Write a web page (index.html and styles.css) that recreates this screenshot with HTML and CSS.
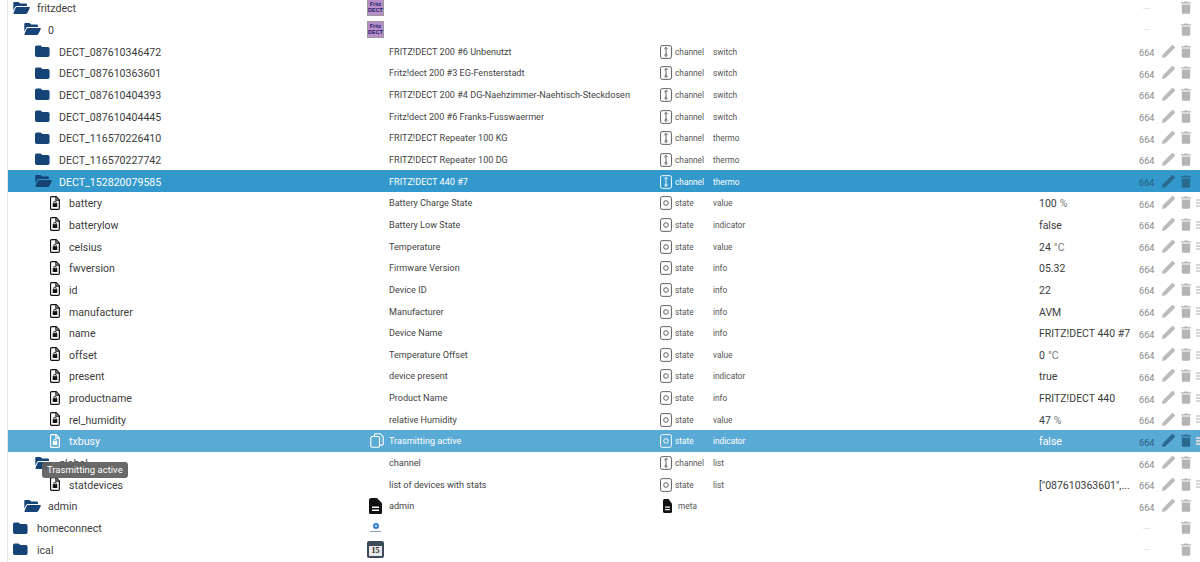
FILE: index.html
```html
<!DOCTYPE html>
<html lang="de">
<head>
<meta charset="utf-8">
<title>fritzdect</title>
<link rel="stylesheet" href="styles.css">
</head>
<body>
<svg class="defs" width="0" height="0" aria-hidden="true">
  <symbol id="closed" viewBox="0 0 19.800 14" preserveAspectRatio="xMinYMid meet"><path d="M2 .5h4.600L8.400 2.400H15a2 2 0 0 1 2 2V12a2 2 0 0 1-2 2H2a2 2 0 0 1-2-2V2.500a2 2 0 0 1 2-2z"/></symbol>
  <symbol id="open" viewBox="0 0 18 14" preserveAspectRatio="none"><path d="M1.500 0h4.300l1.800 1.800h5.700c.9 0 1.500.6 1.500 1.500V4.700H4.300c-1 0-1.800.5-2.200 1.400L.3 10V1.300C.3.500.7 0 1.500 0z"/><path d="M4.200 5.800H17c.7 0 1.100.6.800 1.200l-2.600 5.800c-.4.800-1.100 1.200-2 1.200H1.300c-.7 0-1.100-.6-.8-1.200l2-5.100c.3-1.100.9-1.900 1.700-1.900z"/></symbol>
  <symbol id="lock" viewBox="0 0 11 15" preserveAspectRatio="none"><path class="fileline" d="M1.800.7h5l3.500 3.500v8.900c0 .7-.5 1.200-1.200 1.200H1.800c-.7 0-1.200-.5-1.200-1.200V1.900C.6 1.200 1.100.7 1.800.7z"/><path class="fileline" d="M6.500.9v3.500h3.600"/><path class="filelock" d="M3 7.700h.8V6.800a1.700 1.700 0 0 1 3.400 0v.9H8v4.100H3zM4.700 7.700h1.600V6.800a.8.800 0 0 0-1.600 0z"/></symbol>
  <symbol id="channel" viewBox="0 0 13 15"><rect class="tbox" x=".6" y=".6" width="11.800" height="13.800" rx="1.800"/><path class="tmark" d="M6.500 2.500v7.300M4.700 4.300l1.800-1.800 1.800 1.800"/><circle class="tmark" cx="6.500" cy="11" r="1.200"/></symbol>
  <symbol id="state" viewBox="0 0 13 15"><rect class="tbox" x=".6" y=".6" width="11.800" height="13.800" rx="1.800"/><circle class="tmark" cx="6.500" cy="7.500" r="2.500"/></symbol>
  <symbol id="meta" viewBox="0 0 13 15" preserveAspectRatio="none"><path fill-rule="evenodd" d="M2 0h6l5 5v8.500c0 .9-.7 1.500-1.500 1.500H1.500C.7 15 0 14.400 0 13.500V2C0 .9.900 0 2 0zM3 8v1.300h7V8zM3 10.800v1.300h7v-1.300z"/></symbol>
  <symbol id="pencil" viewBox="0 0 14 14"><path d="M0 14l.7-3.700L9.800 1.200l3 3-9.100 9.100zM10.700.3c.4-.4 1-.4 1.400 0l1.600 1.600c.4.400.4 1 0 1.400l-.9.900-3-3z"/></symbol>
  <symbol id="trash" viewBox="0 0 11 14"><path d="M.9 3.600h9.200v8.800c0 .9-.7 1.600-1.600 1.600h-6c-.9 0-1.600-.7-1.600-1.600zM0 1.300h3.200L3.900.3h3.200l.7 1H11v1.400H0z"/></symbol>
  <symbol id="copy" viewBox="0 0 14 15"><path class="copyline" d="M4.500 3.500V1.900C4.500 1.200 5 .7 5.700.7h4.500l3 3v7.200c0 .7-.5 1.200-1.200 1.200H9.500"/><rect class="copyline" x=".8" y="3.500" width="8.700" height="10.800" rx="1.200"/></symbol>
</svg>

<main class="tree">
  <div class="row">
    <span class="name l0"><svg class="folder"><use href="#open"/></svg>fritzdect</span>
    <span class="pic"><span class="fritz">Fritz<br>DECT</span></span>
    <span class="desc"></span><span class="type"></span><span class="role"></span><span class="value"></span>
    <span class="rights none">---</span><span class="edit"></span><span class="del"><svg class="trash"><use href="#trash"/></svg></span>
  </div>
  <div class="row">
    <span class="name l1"><svg class="folder"><use href="#open"/></svg>0</span>
    <span class="pic"><span class="fritz">Fritz<br>DECT</span></span>
    <span class="desc"></span><span class="type"></span><span class="role"></span><span class="value"></span>
    <span class="rights none">---</span><span class="edit"></span><span class="del"><svg class="trash"><use href="#trash"/></svg></span>
  </div>
  <div class="row">
    <span class="name l2"><svg class="folder"><use href="#closed"/></svg>DECT_087610346472</span><span class="pic"></span>
    <span class="desc">FRITZ!DECT 200 #6 Unbenutzt</span>
    <span class="type"><svg class="ticon"><use href="#channel"/></svg>channel</span><span class="role">switch</span><span class="value"></span>
    <span class="rights">664</span><span class="edit"><svg class="pencil"><use href="#pencil"/></svg></span><span class="del"><svg class="trash"><use href="#trash"/></svg></span>
  </div>
  <div class="row">
    <span class="name l2"><svg class="folder"><use href="#closed"/></svg>DECT_087610363601</span><span class="pic"></span>
    <span class="desc">Fritz!dect 200 #3 EG-Fensterstadt</span>
    <span class="type"><svg class="ticon"><use href="#channel"/></svg>channel</span><span class="role">switch</span><span class="value"></span>
    <span class="rights">664</span><span class="edit"><svg class="pencil"><use href="#pencil"/></svg></span><span class="del"><svg class="trash"><use href="#trash"/></svg></span>
  </div>
  <div class="row">
    <span class="name l2"><svg class="folder"><use href="#closed"/></svg>DECT_087610404393</span><span class="pic"></span>
    <span class="desc">FRITZ!DECT 200 #4 DG-Naehzimmer-Naehtisch-Steckdosen</span>
    <span class="type"><svg class="ticon"><use href="#channel"/></svg>channel</span><span class="role">switch</span><span class="value"></span>
    <span class="rights">664</span><span class="edit"><svg class="pencil"><use href="#pencil"/></svg></span><span class="del"><svg class="trash"><use href="#trash"/></svg></span>
  </div>
  <div class="row">
    <span class="name l2"><svg class="folder"><use href="#closed"/></svg>DECT_087610404445</span><span class="pic"></span>
    <span class="desc">Fritz!dect 200 #6 Franks-Fusswaermer</span>
    <span class="type"><svg class="ticon"><use href="#channel"/></svg>channel</span><span class="role">switch</span><span class="value"></span>
    <span class="rights">664</span><span class="edit"><svg class="pencil"><use href="#pencil"/></svg></span><span class="del"><svg class="trash"><use href="#trash"/></svg></span>
  </div>
  <div class="row">
    <span class="name l2"><svg class="folder"><use href="#closed"/></svg>DECT_116570226410</span><span class="pic"></span>
    <span class="desc">FRITZ!DECT Repeater 100 KG</span>
    <span class="type"><svg class="ticon"><use href="#channel"/></svg>channel</span><span class="role">thermo</span><span class="value"></span>
    <span class="rights">664</span><span class="edit"><svg class="pencil"><use href="#pencil"/></svg></span><span class="del"><svg class="trash"><use href="#trash"/></svg></span>
  </div>
  <div class="row">
    <span class="name l2"><svg class="folder"><use href="#closed"/></svg>DECT_116570227742</span><span class="pic"></span>
    <span class="desc">FRITZ!DECT Repeater 100 DG</span>
    <span class="type"><svg class="ticon"><use href="#channel"/></svg>channel</span><span class="role">thermo</span><span class="value"></span>
    <span class="rights">664</span><span class="edit"><svg class="pencil"><use href="#pencil"/></svg></span><span class="del"><svg class="trash"><use href="#trash"/></svg></span>
  </div>
  <div class="row selected">
    <span class="name l2"><svg class="folder"><use href="#open"/></svg>DECT_152820079585</span><span class="pic"></span>
    <span class="desc">FRITZ!DECT 440 #7</span>
    <span class="type"><svg class="ticon"><use href="#channel"/></svg>channel</span><span class="role">thermo</span><span class="value"></span>
    <span class="rights">664</span><span class="edit"><svg class="pencil"><use href="#pencil"/></svg></span><span class="del"><svg class="trash"><use href="#trash"/></svg></span>
  </div>
  <div class="row">
    <span class="name l3"><svg class="file"><use href="#lock"/></svg>battery</span><span class="pic"></span>
    <span class="desc">Battery Charge State</span>
    <span class="type"><svg class="ticon"><use href="#state"/></svg>state</span><span class="role">value</span><span class="value">100 <small>%</small></span>
    <span class="rights">664</span><span class="edit"><svg class="pencil"><use href="#pencil"/></svg></span><span class="del more"><svg class="trash"><use href="#trash"/></svg></span>
  </div>
  <div class="row">
    <span class="name l3"><svg class="file"><use href="#lock"/></svg>batterylow</span><span class="pic"></span>
    <span class="desc">Battery Low State</span>
    <span class="type"><svg class="ticon"><use href="#state"/></svg>state</span><span class="role">indicator</span><span class="value">false</span>
    <span class="rights">664</span><span class="edit"><svg class="pencil"><use href="#pencil"/></svg></span><span class="del more"><svg class="trash"><use href="#trash"/></svg></span>
  </div>
  <div class="row">
    <span class="name l3"><svg class="file"><use href="#lock"/></svg>celsius</span><span class="pic"></span>
    <span class="desc">Temperature</span>
    <span class="type"><svg class="ticon"><use href="#state"/></svg>state</span><span class="role">value</span><span class="value">24 <small>°C</small></span>
    <span class="rights">664</span><span class="edit"><svg class="pencil"><use href="#pencil"/></svg></span><span class="del more"><svg class="trash"><use href="#trash"/></svg></span>
  </div>
  <div class="row">
    <span class="name l3"><svg class="file"><use href="#lock"/></svg>fwversion</span><span class="pic"></span>
    <span class="desc">Firmware Version</span>
    <span class="type"><svg class="ticon"><use href="#state"/></svg>state</span><span class="role">info</span><span class="value">05.32</span>
    <span class="rights">664</span><span class="edit"><svg class="pencil"><use href="#pencil"/></svg></span><span class="del more"><svg class="trash"><use href="#trash"/></svg></span>
  </div>
  <div class="row">
    <span class="name l3"><svg class="file"><use href="#lock"/></svg>id</span><span class="pic"></span>
    <span class="desc">Device ID</span>
    <span class="type"><svg class="ticon"><use href="#state"/></svg>state</span><span class="role">info</span><span class="value">22</span>
    <span class="rights">664</span><span class="edit"><svg class="pencil"><use href="#pencil"/></svg></span><span class="del more"><svg class="trash"><use href="#trash"/></svg></span>
  </div>
  <div class="row">
    <span class="name l3"><svg class="file"><use href="#lock"/></svg>manufacturer</span><span class="pic"></span>
    <span class="desc">Manufacturer</span>
    <span class="type"><svg class="ticon"><use href="#state"/></svg>state</span><span class="role">info</span><span class="value">AVM</span>
    <span class="rights">664</span><span class="edit"><svg class="pencil"><use href="#pencil"/></svg></span><span class="del more"><svg class="trash"><use href="#trash"/></svg></span>
  </div>
  <div class="row">
    <span class="name l3"><svg class="file"><use href="#lock"/></svg>name</span><span class="pic"></span>
    <span class="desc">Device Name</span>
    <span class="type"><svg class="ticon"><use href="#state"/></svg>state</span><span class="role">info</span><span class="value">FRITZ!DECT 440 #7</span>
    <span class="rights">664</span><span class="edit"><svg class="pencil"><use href="#pencil"/></svg></span><span class="del more"><svg class="trash"><use href="#trash"/></svg></span>
  </div>
  <div class="row">
    <span class="name l3"><svg class="file"><use href="#lock"/></svg>offset</span><span class="pic"></span>
    <span class="desc">Temperature Offset</span>
    <span class="type"><svg class="ticon"><use href="#state"/></svg>state</span><span class="role">value</span><span class="value">0 <small>°C</small></span>
    <span class="rights">664</span><span class="edit"><svg class="pencil"><use href="#pencil"/></svg></span><span class="del more"><svg class="trash"><use href="#trash"/></svg></span>
  </div>
  <div class="row">
    <span class="name l3"><svg class="file"><use href="#lock"/></svg>present</span><span class="pic"></span>
    <span class="desc">device present</span>
    <span class="type"><svg class="ticon"><use href="#state"/></svg>state</span><span class="role">indicator</span><span class="value">true</span>
    <span class="rights">664</span><span class="edit"><svg class="pencil"><use href="#pencil"/></svg></span><span class="del more"><svg class="trash"><use href="#trash"/></svg></span>
  </div>
  <div class="row">
    <span class="name l3"><svg class="file"><use href="#lock"/></svg>productname</span><span class="pic"></span>
    <span class="desc">Product Name</span>
    <span class="type"><svg class="ticon"><use href="#state"/></svg>state</span><span class="role">info</span><span class="value">FRITZ!DECT 440</span>
    <span class="rights">664</span><span class="edit"><svg class="pencil"><use href="#pencil"/></svg></span><span class="del more"><svg class="trash"><use href="#trash"/></svg></span>
  </div>
  <div class="row">
    <span class="name l3"><svg class="file"><use href="#lock"/></svg>rel_humidity</span><span class="pic"></span>
    <span class="desc">relative Humidity</span>
    <span class="type"><svg class="ticon"><use href="#state"/></svg>state</span><span class="role">value</span><span class="value">47 <small>%</small></span>
    <span class="rights">664</span><span class="edit"><svg class="pencil"><use href="#pencil"/></svg></span><span class="del more"><svg class="trash"><use href="#trash"/></svg></span>
  </div>
  <div class="row hovered">
    <span class="name l3"><svg class="file"><use href="#lock"/></svg>txbusy</span>
    <span class="pic"><svg class="copy"><use href="#copy"/></svg></span>
    <span class="desc">Trasmitting active</span>
    <span class="type"><svg class="ticon"><use href="#state"/></svg>state</span><span class="role">indicator</span><span class="value">false</span>
    <span class="rights">664</span><span class="edit"><svg class="pencil"><use href="#pencil"/></svg></span><span class="del more"><svg class="trash"><use href="#trash"/></svg></span>
  </div>
  <div class="row">
    <span class="name l2"><svg class="folder"><use href="#open"/></svg>global</span><span class="pic"></span>
    <span class="desc">channel</span>
    <span class="type"><svg class="ticon"><use href="#channel"/></svg>channel</span><span class="role">list</span><span class="value"></span>
    <span class="rights">664</span><span class="edit"><svg class="pencil"><use href="#pencil"/></svg></span><span class="del"><svg class="trash"><use href="#trash"/></svg></span>
  </div>
  <div class="row">
    <span class="name l3"><svg class="file"><use href="#lock"/></svg>statdevices</span><span class="pic"></span>
    <span class="desc">list of devices with stats</span>
    <span class="type"><svg class="ticon"><use href="#state"/></svg>state</span><span class="role">list</span><span class="value">["087610363601",...</span>
    <span class="rights">664</span><span class="edit"><svg class="pencil"><use href="#pencil"/></svg></span><span class="del more"><svg class="trash"><use href="#trash"/></svg></span>
  </div>
  <div class="row">
    <span class="name l1"><svg class="folder"><use href="#open"/></svg>admin</span>
    <span class="pic"><svg class="metaicon"><use href="#meta"/></svg></span>
    <span class="desc">admin</span>
    <span class="type"><svg class="metatype"><use href="#meta"/></svg>meta</span><span class="role"></span><span class="value"></span>
    <span class="rights">664</span><span class="edit"><svg class="pencil"><use href="#pencil"/></svg></span><span class="del"><svg class="trash"><use href="#trash"/></svg></span>
  </div>
  <div class="row">
    <span class="name l0"><svg class="folder"><use href="#closed"/></svg>homeconnect</span>
    <span class="pic"><span class="hc"><span class="hcring"></span><span class="hcline"></span></span></span>
    <span class="desc"></span><span class="type"></span><span class="role"></span><span class="value"></span>
    <span class="rights none">---</span><span class="edit"></span><span class="del"><svg class="trash"><use href="#trash"/></svg></span>
  </div>
  <div class="row">
    <span class="name l0"><svg class="folder"><use href="#closed"/></svg>ical</span>
    <span class="pic"><span class="cal"><span class="calday">15</span></span></span>
    <span class="desc"></span><span class="type"></span><span class="role"></span><span class="value"></span>
    <span class="rights none">---</span><span class="edit"></span><span class="del"><svg class="trash"><use href="#trash"/></svg></span>
  </div>
  <div class="tooltip">Trasmitting active</div>
</main>
</body>
</html>
```
FILE: styles.css
```css
* { box-sizing: border-box; }
html, body { margin: 0; height: 100%; overflow: hidden; background: #fff; }
body { font-family: Roboto, "Open Sans", sans-serif; color: #333; }
.defs { position: absolute; }
.tree {
  position: relative;
  margin: -3px 0 0 7px;
  border-left: 1px solid #e8e8e8;
  height: 570px;
  overflow: hidden;
}
.row {
  display: grid;
  grid-template-columns: 359px 22px 271px 53px 326px 100px 23px 19px 38px;
  width: 1220px;
  height: 21.67px;
  align-items: center;
  white-space: nowrap;
}
.row > span { display: flex; align-items: center; min-width: 0; overflow: hidden; height: 100%; }
.name { font-size: 10.600px; color: #3c3c3c; padding-top: 2px; }
.l0 { padding-left: 5px; }
.l1 { padding-left: 16px; }
.l2 { padding-left: 27px; }
.l3 { padding-left: 42px; }
.folder { width: 17px; height: 12px; margin: -2px 7px 0 0; fill: #164477; flex: none; }
.file { width: 10px; height: 14px; margin: -2px 9px 0 0; flex: none; color: #111; }
.fileline { fill: none; stroke: currentColor; stroke-width: 1.300; }
.filelock { fill: currentColor; fill-rule: evenodd; }
.desc { font-size: 9.100px; color: #444; padding-top: 1px; }
.type { font-size: 8.300px; color: #555; padding-top: 1px; }
.ticon { width: 12px; height: 14px; margin-right: 3px; flex: none; color: #555; }
.tbox { fill: none; stroke: currentColor; stroke-width: 1; }
.tmark { fill: none; stroke: currentColor; stroke-width: 1; }
.metatype { width: 9px; height: 14px; margin: 0 6px 0 3px; fill: #111; flex: none; }
.role { font-size: 8.300px; color: #555; padding-top: 1px; }
.value { font-size: 10.500px; color: #3c3c3c; padding-top: 2px; }
.value small { font-size: 10.500px; color: #777; margin-left: 3px; }
.rights { font-size: 9.200px; color: #888; padding-top: 3px; }
.rights.none { color: #ccc; padding-left: 4px; font-size: 8px; padding-top: 1px; }
.pencil { width: 13px; height: 13px; fill: #bbb; flex: none; }
.trash { width: 10px; height: 13px; fill: #b5b5b5; flex: none; }
.more { position: relative; overflow: visible !important; }
.more::after {
  content: "";
  position: absolute;
  left: 15px;
  top: 7px;
  width: 4px;
  height: 8px;
  background: repeating-linear-gradient(#d6d6d6 0 2px, transparent 2px 3px);
}
.selected { background: #3399cc; }
.hovered { background: #5aaad6; }
.selected .name, .selected .desc, .selected .type, .selected .role,
.hovered .name, .hovered .desc, .hovered .type, .hovered .role, .hovered .value { color: #fff; }
.selected .ticon, .hovered .ticon, .hovered .file { color: #fff; }
.selected .rights, .hovered .rights { color: #2a5f80; }
.selected .pencil, .selected .trash, .hovered .pencil, .hovered .trash { fill: #2a6a8f; }
.copy { width: 14px; height: 15px; margin-left: 3px; color: #fff; }
.copyline { fill: none; stroke: currentColor; stroke-width: 1.100; }
.metaicon { width: 13px; height: 16px; margin-left: 2px; fill: #111; }
.fritz {
  width: 17px;
  height: 17px;
  display: block;
  background: #b98fca;
  border: 1px solid #9a9a9a;
  color: #1a1a66;
  font-size: 5.500px;
  line-height: 6px;
  font-weight: 700;
  text-align: center;
  padding-top: 1px;
  font-family: "Liberation Sans", sans-serif;
}
.hc { width: 17px; display: flex; flex-direction: column; align-items: center; gap: 2px; }
.hcring { width: 6px; height: 6px; border: 2px solid #2a7de1; border-radius: 50%; }
.hcline { width: 11px; height: 1px; background: #8aa0c0; }
.cal {
  width: 17px;
  height: 17px;
  display: flex;
  align-items: flex-end;
  justify-content: center;
  background: #3d4a5a;
  border-radius: 2px;
  padding: 4px 2px 2px;
}
.calday {
  display: block;
  width: 100%;
  height: 10px;
  background: #e8e8e8;
  color: #222;
  font: 700 8px/10px "Liberation Serif", serif;
  text-align: center;
}
.tooltip {
  position: absolute;
  left: 34px;
  top: 465px;
  height: 16px;
  padding: 0 5px;
  background: rgba(97, 97, 97, .95);
  color: #fff;
  font-size: 9.500px;
  line-height: 16px;
  border-radius: 3px;
  white-space: nowrap;
}
```
